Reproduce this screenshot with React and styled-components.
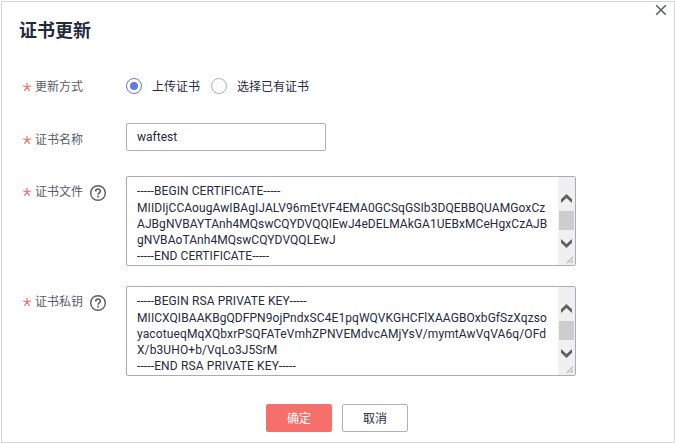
import React from "react";
import styled, { createGlobalStyle } from "styled-components";

const GlobalStyle = createGlobalStyle`
  *, *::before, *::after { box-sizing: border-box; }
  body {
    margin: 0;
    background: #fff;
    overflow: hidden;
    color: #252b3a;
    font: 12px/16px Roboto, "Noto Sans CJK SC", sans-serif;
  }
`;

const Dialog = styled.section`
  position: relative;
  width: 674px;
  height: 442px;
  margin: 1px 0 0 1px;
  border: 1px solid #d5d6d8;
  background: #fff;
`;

const CloseButton = styled.button`
  position: absolute;
  top: 2px;
  right: 7px;
  width: 12px;
  height: 12px;
  padding: 0;
  border: 0;
  background: none;
  svg { display: block; }
`;

const Title = styled.h1`
  margin: 0;
  padding: 16px 0 0 17px;
  height: 71px;
  font-size: 18px;
  line-height: 26px;
  font-weight: 700;
`;

const Form = styled.div`
  display: flex;
  flex-direction: column;
  padding-left: 20px;
`;

const Row = styled.div`
  display: grid;
  grid-template-columns: 104px 1fr;
  align-items: start;
  height: ${(p) => p.$height}px;
`;

const Label = styled.div`
  display: flex;
  align-items: center;
  height: 18px;
  margin-top: ${(p) => p.$top}px;
  color: #575d6c;
`;

const Star = styled.svg`
  width: 10px;
  height: 10px;
  margin: 0 3px 0 0;
`;

const HelpIcon = styled.svg`
  width: 16px;
  height: 16px;
  margin: 2px 0 0 7px;
`;

const RadioGroup = styled.div`
  display: flex;
  gap: 11px;
  margin-top: 5px;
`;

const RadioOption = styled.label`
  display: flex;
  align-items: center;
  gap: 10px;
  height: 16px;
`;

const RadioText = styled.span`
  padding-top: 2px;
`;

const RadioMark = styled.span`
  display: grid;
  place-items: center;
  width: 16px;
  height: 16px;
  border: 1px solid ${(p) => (p.$checked ? "#5e7ce0" : "#adb0b8")};
  border-radius: 50%;
  &::after {
    content: "";
    width: 8px;
    height: 8px;
    border-radius: 50%;
    background: ${(p) => (p.$checked ? "#5e7ce0" : "transparent")};
  }
`;

const TextInput = styled.input`
  width: 200px;
  height: 28px;
  padding: 0 10px;
  border: 1px solid #adb0b8;
  border-radius: 2px;
  color: inherit;
  font: inherit;
  outline: 0;
`;

const TextBox = styled.div`
  display: flex;
  justify-content: space-between;
  width: 450px;
  height: 90px;
  border: 1px solid #a9abb8;
  border-radius: 2px;
  overflow: hidden;
`;

const Lines = styled.div`
  padding: 6px 0 0 10px;
  white-space: nowrap;
`;

const Line = styled.div`
  height: 16px;
  letter-spacing: ${(p) => p.$spacing || 0}px;
  &:first-child { height: 17px; }
`;

const ScrollBar = styled.svg`
  flex: none;
  width: 17px;
  height: 88px;
`;

const Actions = styled.div`
  display: flex;
  gap: 10px;
  padding-left: 264px;
`;

const Button = styled.button`
  width: 66px;
  height: 28px;
  padding: 2px 0 0;
  border: 1px solid ${(p) => (p.$primary ? "#f66f6a" : "#adb0b8")};
  border-radius: 2px;
  background: ${(p) => (p.$primary ? "#f66f6a" : "#fff")};
  color: ${(p) => (p.$primary ? "#fff" : "#252b3a")};
  font: inherit;
`;

function FieldLabel({ children, top, help }) {
  return (
    <Label $top={top}>
      <Star viewBox="0 0 10 10" fill="none" stroke="#f66f6a" strokeWidth="1.2">
        <path d="M5 .8V5M5 5 1 3.8M5 5 9 3.8M5 5 2.4 8.8M5 5 7.6 8.8" />
      </Star>
      {children}
      {help && (
        <HelpIcon viewBox="0 0 16 16" fill="none" stroke="#575d6c">
          <circle cx="8" cy="8" r="7.3" strokeWidth="1.4" />
          <path d="M5.7 6.4C5.7 3.3 10.4 3.4 10.4 6.1C10.4 7.8 8.1 7.8 8.1 9.7" strokeWidth="1.6" />
          <path d="M8.1 10.8V12.4" strokeWidth="1.7" />
        </HelpIcon>
      )}
    </Label>
  );
}

function ScrollText({ lines }) {
  return (
    <TextBox>
      <Lines>
        {lines.map(([text, spacing]) => (
          <Line key={text} $spacing={spacing}>{text}</Line>
        ))}
      </Lines>
      <ScrollBar viewBox="0 0 17 88">
        <path fill="#f0f0f0" d="M0 0H17V88H0Z" />
        <path fill="#cdcdcd" d="M1 34H16V53H1Z" />
        <path fill="#606060" d="M8.5 17 14 22.3V26L8.5 20.9 3 26V22.3ZM8.5 71 14 65.7V62L8.5 67.1 3 62V65.7Z" />
        <path stroke="#b8b8b8" strokeWidth="1.2" d="M9 86 15 80M12.5 86 15 83.5" />
      </ScrollBar>
    </TextBox>
  );
}

const certificate = [
  ["-----BEGIN CERTIFICATE-----", 0.08],
  ["MIIDIjCCAougAwIBAgIJALV96mEtVF4EMA0GCSqGSIb3DQEBBQUAMGoxCz", 0.08],
  ["AJBgNVBAYTAnh4MQswCQYDVQQIEwJ4eDELMAkGA1UEBxMCeHgxCzAJB", 0.06],
  ["gNVBAoTAnh4MQswCQYDVQQLEwJ", 0.06],
  ["-----END CERTIFICATE-----", 0.08],
];

const privateKey = [
  ["-----BEGIN RSA PRIVATE KEY-----", 0.1],
  ["MIICXQIBAAKBgQDFPN9ojPndxSC4E1pqWQVKGHCFlXAAGBOxbGfSzXqzso", 0.07],
  ["yacotueqMqXQbxrPSQFATeVmhZPNVEMdvcAMjYsV/mymtAwVqVA6q/OFd", 0.12],
  ["X/b3UHO+b/VqLo3J5SrM", 0.1],
  ["-----END RSA PRIVATE KEY-----", 0.12],
];

export default function App() {
  return (
    <>
      <GlobalStyle />
      <Dialog>
        <CloseButton aria-label="关闭">
          <svg width="12" height="12" viewBox="0 0 12 12" stroke="#575d6c" strokeWidth="1.5">
            <path d="M1.2 1.2 10.8 10.8M10.8 1.2 1.2 10.8" />
          </svg>
        </CloseButton>
        <Title>证书更新</Title>
        <Form>
          <Row $height={50}>
            <FieldLabel top={5}>更新方式</FieldLabel>
            <RadioGroup>
              <RadioOption><RadioMark $checked /><RadioText>上传证书</RadioText></RadioOption>
              <RadioOption><RadioMark /><RadioText>选择已有证书</RadioText></RadioOption>
            </RadioGroup>
          </Row>
          <Row $height={53}>
            <FieldLabel top={8}>证书名称</FieldLabel>
            <TextInput defaultValue="waftest" />
          </Row>
          <Row $height={110}>
            <FieldLabel top={7} help>证书文件</FieldLabel>
            <ScrollText lines={certificate} />
          </Row>
          <Row $height={118}>
            <FieldLabel top={7} help>证书私钥</FieldLabel>
            <ScrollText lines={privateKey} />
          </Row>
        </Form>
        <Actions>
          <Button $primary>确定</Button>
          <Button>取消</Button>
        </Actions>
      </Dialog>
    </>
  );
}
